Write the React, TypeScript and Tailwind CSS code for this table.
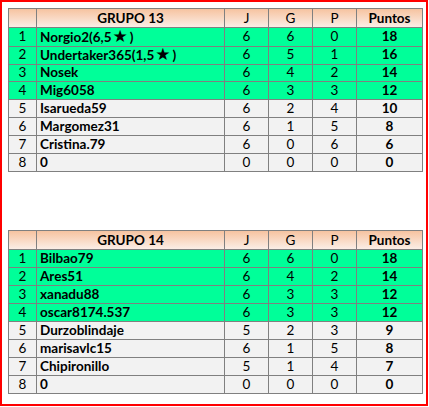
type Row = { pos: number; name: string; star?: string; j: number; g: number; p: number; pts: number; top: boolean };

const grupo13: Row[] = [
    { pos: 1, name: "Norgio2(6,5", star: ")", j: 6, g: 6, p: 0, pts: 18, top: true },
    { pos: 2, name: "Undertaker365(1,5", star: ")", j: 6, g: 5, p: 1, pts: 16, top: true },
    { pos: 3, name: "Nosek", j: 6, g: 4, p: 2, pts: 14, top: true },
    { pos: 4, name: "Mig6058", j: 6, g: 3, p: 3, pts: 12, top: true },
    { pos: 5, name: "Isarueda59", j: 6, g: 2, p: 4, pts: 10, top: false },
    { pos: 6, name: "Margomez31", j: 6, g: 1, p: 5, pts: 8, top: false },
    { pos: 7, name: "Cristina.79", j: 6, g: 0, p: 6, pts: 6, top: false },
    { pos: 8, name: "0", j: 0, g: 0, p: 0, pts: 0, top: false },
];

const grupo14: Row[] = [
    { pos: 1, name: "Bilbao79", j: 6, g: 6, p: 0, pts: 18, top: true },
    { pos: 2, name: "Ares51", j: 6, g: 4, p: 2, pts: 14, top: true },
    { pos: 3, name: "xanadu88", j: 6, g: 3, p: 3, pts: 12, top: true },
    { pos: 4, name: "oscar8174.537", j: 6, g: 3, p: 3, pts: 12, top: true },
    { pos: 5, name: "Durzoblindaje", j: 5, g: 2, p: 3, pts: 9, top: false },
    { pos: 6, name: "marisavlc15", j: 6, g: 1, p: 5, pts: 8, top: false },
    { pos: 7, name: "Chipironillo", j: 5, g: 1, p: 4, pts: 7, top: false },
    { pos: 8, name: "0", j: 0, g: 0, p: 0, pts: 0, top: false },
];

function GroupTable({ title, rows }: { title: string; rows: Row[] }) {
    return (
        <div className="w-[415px] border-l border-t border-[#808080] text-[13.5px] text-black">
            <div className="grid grid-cols-[28px_188px_44px_44px_44px_66px] h-[19px] leading-[18px] bg-gradient-to-b from-[#f6c3a0] to-[#fbf0ea] font-bold text-center">
                <div className="border-r border-b border-[#808080]" />
                <div className="border-r border-b border-[#808080]">{title}</div>
                <div className="border-r border-b border-[#808080] font-normal">J</div>
                <div className="border-r border-b border-[#808080] font-normal">G</div>
                <div className="border-r border-b border-[#808080] font-normal">P</div>
                <div className="border-r border-b border-[#808080]">Puntos</div>
            </div>
            {rows.map((r) => (
                <div
                    key={r.pos}
                    className={`grid grid-cols-[28px_188px_44px_44px_44px_66px] h-[18px] leading-[17px] text-center ${r.top ? "bg-[#00ff99]" : "bg-[#f2f2f2]"}`}
                >
                    <div className="border-r border-b border-[#808080]">{r.pos}</div>
                    <div className="border-r border-b border-[#808080] pl-[3px] text-left font-bold whitespace-nowrap">
                        {r.name}
                        {r.star && (
                            <>
                                <span className="text-[17px] leading-none font-['DejaVu_Sans',sans-serif] ml-[1px]">★</span>
                                <span className="ml-[2px]">{r.star}</span>
                            </>
                        )}
                    </div>
                    <div className="border-r border-b border-[#808080]">{r.j}</div>
                    <div className="border-r border-b border-[#808080]">{r.g}</div>
                    <div className="border-r border-b border-[#808080]">{r.p}</div>
                    <div className="border-r border-b border-[#808080] font-bold">{r.pts}</div>
                </div>
            ))}
        </div>
    );
}

export default function App() {
    return (
        <div className="w-[428px] h-[406px] bg-white border-2 border-[#ff0000] pt-[6px] pl-[6px] font-['Lato',sans-serif]">
            <div className="flex flex-col gap-[58px]">
                <GroupTable title="GRUPO 13" rows={grupo13} />
                <GroupTable title="GRUPO 14" rows={grupo14} />
            </div>
        </div>
    );
}
